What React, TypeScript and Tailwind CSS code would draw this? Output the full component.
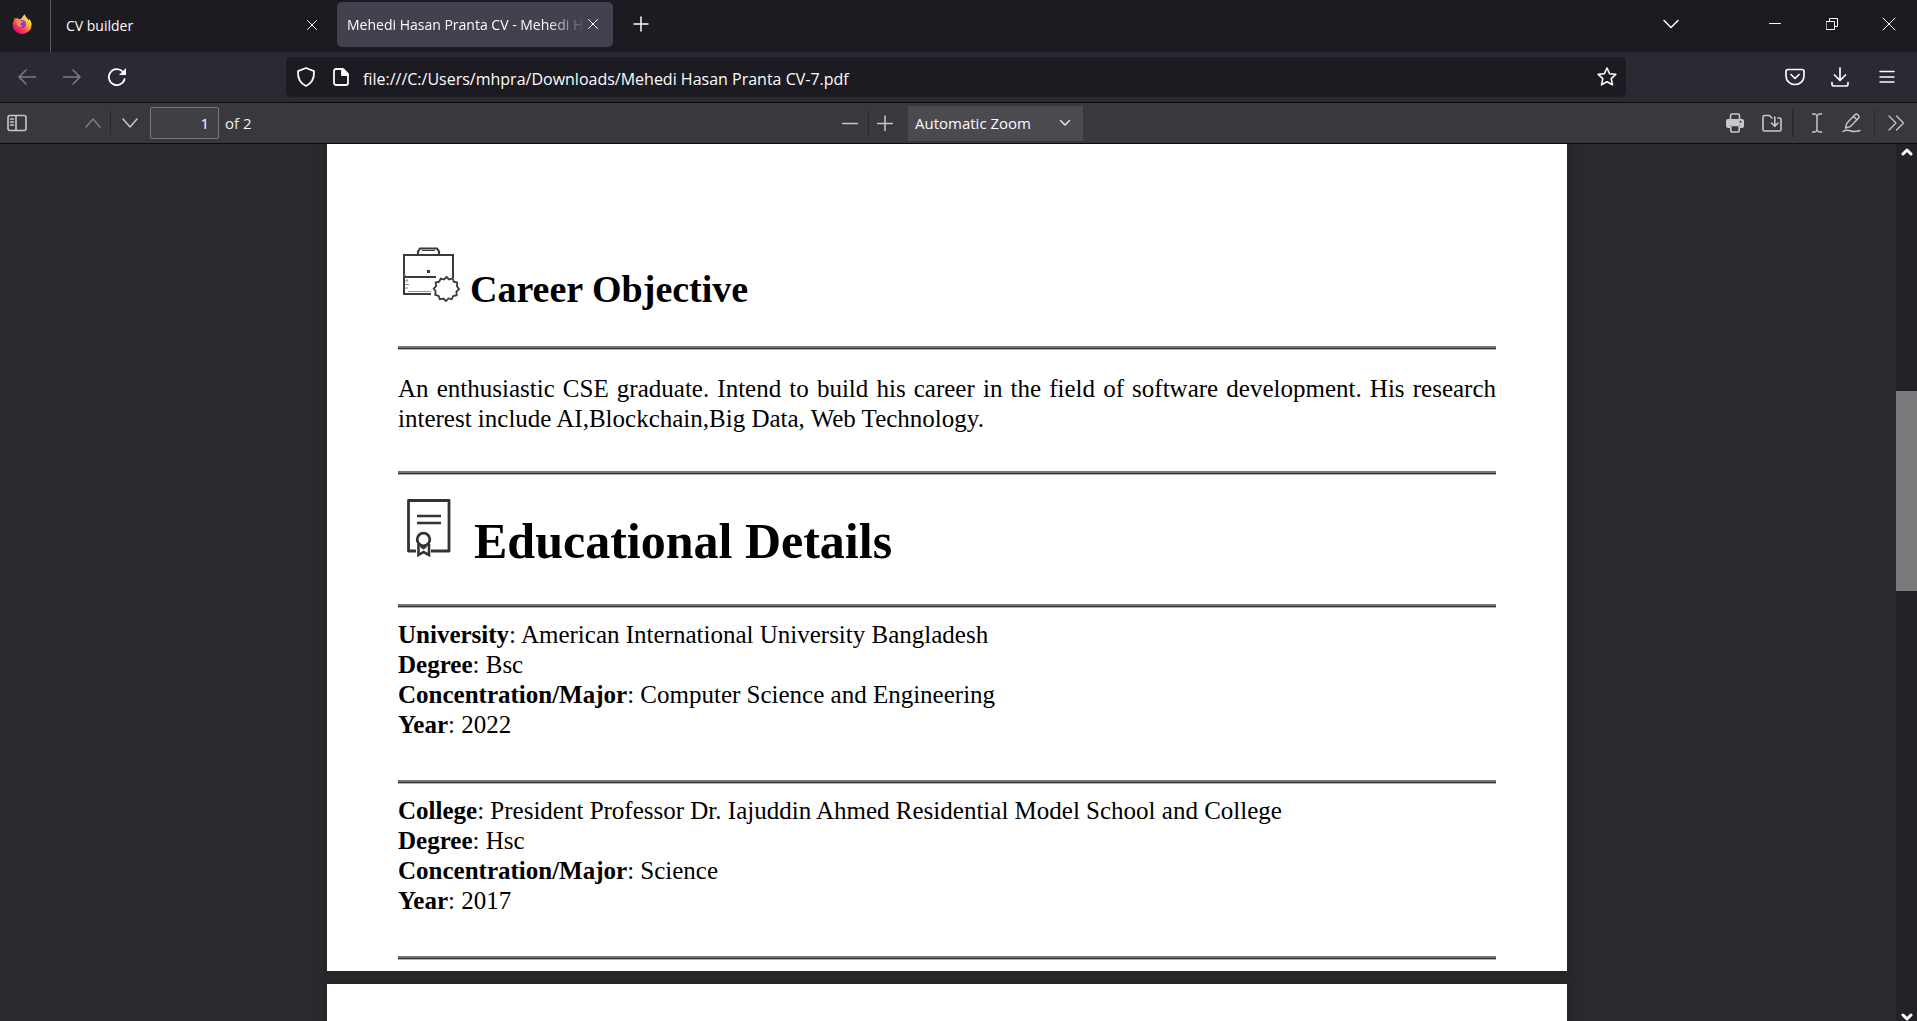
import React from "react";

type P = { d: string; size: number; sw?: number; vb?: number; cls?: string };

function Icon({ d, size, sw = 1.5, vb = 24, cls = "" }: P) {
  return (
    <svg width={size} height={size} viewBox={`0 0 ${vb} ${vb}`} fill="none" stroke="currentColor" strokeWidth={sw} strokeLinecap="round" strokeLinejoin="round" className={"shrink-0 " + cls} aria-hidden="true">
      <path d={d} />
    </svg>
  );
}

function FirefoxLogo() {
  return (
    <svg width="20" height="20" viewBox="0 0 20 20" aria-hidden="true">
      <defs>
        <linearGradient id="flame" x1="0.85" y1="0.1" x2="0.2" y2="0.95">
          <stop offset="0" stopColor="#fff44f" />
          <stop offset="0.35" stopColor="#ffb22e" />
          <stop offset="0.6" stopColor="#ff5a3c" />
          <stop offset="0.85" stopColor="#f5156c" />
          <stop offset="1" stopColor="#d9107c" />
        </linearGradient>
        <linearGradient id="globe" x1="0.7" y1="0" x2="0.3" y2="1">
          <stop offset="0" stopColor="#a63cf0" />
          <stop offset="1" stopColor="#5b3fe0" />
        </linearGradient>
      </defs>
      <path d="M12.800.2c.2 1.900 1.300 2.800 2.500 4 .6.600 1 1.300 1.200 2 .500-.300.700-.800.700-1.300 1.500 1.600 2.400 3.800 2.400 6a9.400 9.100 0 0 1-18.900 0c0-2.300.700-3.900 1.500-5.100 0-.900.200-1.700.600-2.300.300.700.700 1.100 1.200 1.500.500-.900 1-1.400 1.600-1.700 0 .7.200 1.200.6 1.600 1 .1 2 .1 2.900-.1 1-1.500 2.200-3.400 3.700-4.600z" fill="url(#flame)" />
      <circle cx="10" cy="10" r="4" fill="url(#globe)" />
      <path d="M4.300 7.400c1.200-1.200 3-1.400 4.300-.500.700.400 1.600.400 2.400.5-.2.900-1 1.300-1.800 1.600-.8.300-1 .8-.8 1.400.3.900 1.400 1.300 2.600.8-.7 1.600-2.800 2-4.200 1-1.500-1.100-2.200-3-2.500-4.800z" fill="#ff9640" />
    </svg>
  );
}

function Briefcase() {
  return (
    <svg width="64" height="64" viewBox="0 0 64 64" fill="none" stroke="#3a3a3a" aria-hidden="true" className="mb-[5px] shrink-0">
      <path d="M55 37V14H6V53H33" strokeWidth="2" />
      <path d="M6 36H38" strokeWidth="2" />
      <path d="M20 14V10.500L22 7.500H39L41 10.500V14" strokeWidth="2.200" />
      <path d="M24 9.500H37" strokeWidth="1" />
      <path d="M10 50.500H33" strokeWidth="1" stroke="#999" />
      <path d="M7 35V33M9 38v2M7 40H10M7 43.500H11M7 47H10" strokeWidth="1" stroke="#888" />
      <rect x="29.500" y="29.500" width="2" height="2" strokeWidth="1" fill="#3a3a3a" />
      <path d="M48.500 36l2.500 2.500 3.500-1.200 1.200 3.400 3.500.8-.3 3.600 2.100 3.100-2.600 2.500.3 3.500-3.500.8-1.500 3.300-3.300-.8-2.400 2.500-2.700-2.500-3.500.8-1.200-3.300-3.400-1.200.5-3.300-2-2.900 2.400-2.500-.4-3.600 3.500-.8 1.500-3.200 3.300 1z" strokeWidth="1.800" />
    </svg>
  );
}

function Certificate() {
  return (
    <svg width="64" height="64" viewBox="0 0 64 64" fill="none" stroke="#333" aria-hidden="true" className="mb-3 shrink-0">
      <path d="M18 58H10.500V7.500H51V58H33" strokeWidth="2.800" strokeLinejoin="round" />
      <path d="M19 23H43M19 30H43" strokeWidth="2.600" />
      <circle cx="25.500" cy="46.500" r="6.300" strokeWidth="2.800" />
      <path d="M20.500 51V62L25.500 59L31 62V51M23 53.500L25.500 55L28 53.500" strokeWidth="2.600" />
    </svg>
  );
}

const Rule = ({ cls }: { cls: string }) => (
  <hr className={"h-[3px] border-0 border-t-2 border-b border-t-[#777] border-b-[#333] shadow-[0_1px_0_#b4b4b4] " + cls} />
);

const btn = "flex shrink-0 items-center justify-center";

function Entry({ rows }: { rows: [string, string][] }) {
  return (
    <dl>
      {rows.map(([k, v]) => (
        <div key={k}>
          <dt className="inline font-bold">{k}</dt>
          <dd className="inline">: {v}</dd>
        </div>
      ))}
    </dl>
  );
}

export default function App() {
  return (
    <div className="flex h-screen flex-col overflow-hidden bg-[#2a2a2e] font-['Open_Sans',sans-serif] text-[#fbfbfe]">
      <header className="flex h-[52px] shrink-0 items-center bg-[#1c1b22]">
        <button aria-label="Firefox" className={btn + " h-full w-[51px] border-r border-[#5b5b66] pr-1.5 pb-1"}><FirefoxLogo /></button>
        <div className="flex w-[286px] items-center justify-between pb-0.5 pl-[15px] pr-4">
          <button className="text-[14px]">CV builder</button>
          <button aria-label="Close CV builder" className={btn + " size-[18px]"}><Icon size={12} vb={12} sw={1} d="M1.500 1.500l9 9M10.500 1.500l-9 9" /></button>
        </div>
        <div className="mb-1 flex h-[45px] w-[276px] items-center rounded-[5px] bg-[#42414d] pl-[10px] pr-3">
          <button className="min-w-0 flex-1 text-left text-[14px] whitespace-nowrap [mask-image:linear-gradient(to_right,black_84%,transparent)]">Mehedi Hasan Pranta CV - Mehedi H</button>
          <button aria-label="Close tab" className={btn + " size-[16px]"}><Icon size={12} vb={12} sw={1} d="M1.500 1.500l9 9M10.500 1.500l-9 9" /></button>
        </div>
        <button aria-label="New tab" className={btn + " mb-1 ml-[18px] size-5"}><Icon size={16} vb={16} sw={1.500} d="M8 1v14M1 8h14" /></button>
        <div className="flex-1" />
        <div className="mb-1 flex items-center">
          <button aria-label="List all tabs" className={btn + " w-10"}><Icon size={18} vb={18} d="M2 5.500l7 7 7-7" /></button>
          <button aria-label="Minimize" className={btn + " ml-[55px] w-[57px]"}><Icon size={12} vb={12} sw={1} d="M0 5.500h12" /></button>
          <button aria-label="Restore" className={btn + " w-[57px]"}><Icon size={12} vb={12} sw={1} d="M.5 3.500h8v8h-8zM3.500 3.500v-3h8v8h-3" /></button>
          <button aria-label="Close window" className={btn + " w-[57px]"}><Icon size={14} vb={14} sw={1} d="M1 1l12 12M13 1L1 13" /></button>
        </div>
      </header>

      <nav className="flex h-[50px] shrink-0 items-center bg-[#2b2a33]">
        <button aria-label="Back" className={btn + " ml-1 w-[45px] text-[#7d7c85]"}><Icon size={20} vb={20} d="M18.500 10H2M9 3L2 10l7 7" /></button>
        <button aria-label="Forward" className={btn + " w-[45px] text-[#7d7c85]"}><Icon size={20} vb={20} d="M1.500 10H18M11 3l7 7-7 7" /></button>
        <button aria-label="Reload" className={btn + " w-[45px]"}>
          <svg width="20" height="20" viewBox="0 0 20 20" fill="none" stroke="currentColor" strokeWidth="1.800" strokeLinecap="round" aria-hidden="true"><path d="M17.600 12a8 8 0 1 1-2-7.500" /><path d="M19 1v7h-7z" fill="currentColor" stroke="none" /></svg>
        </button>
        <div className="ml-[147px] flex h-10 flex-1 items-center rounded-[5px] bg-[#1c1b22]">
          <button aria-label="Tracking protection" className={btn + " ml-[10px] w-5"}><Icon size={20} vb={20} sw={1.800} d="M10 1l8 3.200c.3 6-2 12-8 14.800-6-2.800-8.300-8.800-8-14.800z" /></button>
          <button aria-label="Page information" className={btn + " ml-[15px] w-5"}>
            <svg width="18" height="18" viewBox="0 0 18 18" fill="none" stroke="currentColor" strokeWidth="1.800" strokeLinejoin="round" aria-hidden="true"><path d="M4 1h7l5 5v9a2 2 0 0 1-2 2H4a2 2 0 0 1-2-2V3a2 2 0 0 1 2-2z" /><path d="M10 1v6h6z" fill="currentColor" /></svg>
          </button>
          <input aria-label="Address" readOnly value="file:///C:/Users/mhpra/Downloads/Mehedi Hasan Pranta CV-7.pdf" className="ml-3 min-w-0 flex-1 bg-transparent pt-1 text-[16px] outline-none" />
          <button aria-label="Bookmark" className={btn + " mr-[9px] w-5"}><Icon size={20} vb={20} sw={1.600} d="M10 1l2.600 5.700 6.200.7-4.600 4.200 1.300 6.200L10 14.700l-5.500 3.100 1.300-6.200L1.200 7.400l6.200-.7z" /></button>
        </div>
        <button aria-label="Save to Pocket" className={btn + " ml-[147px] w-11"}><Icon size={20} vb={20} sw={1.700} d="M3 2.500h14a2 2 0 0 1 2 2V9a9 8.500 0 0 1-18 0V4.500a2 2 0 0 1 2-2zM6 7.500l4 4 4-4" /></button>
        <button aria-label="Downloads" className={btn + " w-[46px]"}><Icon size={20} vb={20} sw={1.700} d="M10 1v12M4.500 8l5.500 5.500L15.500 8M2 15.500v1.500a2 2 0 0 0 2 2h12a2 2 0 0 0 2-2v-1.500" /></button>
        <button aria-label="Menu" className={btn + " mr-1.5 w-12"}><Icon size={18} vb={18} sw={1.500} d="M2 3.500h14M2 9h14M2 14h14" /></button>
      </nav>

      <div role="toolbar" aria-label="Document" className="flex h-[42px] shrink-0 items-center justify-between border-y border-[#0c0c0d] bg-[#38383d] text-[#c8c8ca]">
        <div className="flex flex-1 items-center">
          <button aria-label="Toggle sidebar" className={btn + " ml-[7px] w-5"}><Icon size={20} vb={20} sw={1.600} d="M3 2.500h14a2 2 0 0 1 2 2v11a2 2 0 0 1-2 2H3a2 2 0 0 1-2-2v-11a2 2 0 0 1 2-2zM9 2.500v15M3.500 6h3M3.500 9h3M3.500 12h3" /></button>
          <button aria-label="Previous page" className={btn + " ml-[49px] w-[34px] text-[#7f7f83]"}><Icon size={16} vb={16} d="M1 12l7-8 7 8" /></button>
          <span className="h-6 w-px bg-[#29292c]" />
          <button aria-label="Next page" className={btn + " w-[38px]"}><Icon size={16} vb={16} d="M1 4l7 8 7-8" /></button>
          <input aria-label="Page" readOnly value="1" className="ml-px h-8 w-[69px] rounded-[2px] border border-[#77777b] bg-[#404044] pr-[9px] text-right text-[15px] text-[#fbfbfe]" />
          <span className="ml-1.5 text-[15px] text-[#f0f0f2]">of 2</span>
        </div>
        <div className="flex shrink-0 items-center pr-0.5">
          <button aria-label="Zoom out" className={btn + " w-9"}><Icon size={16} vb={16} d="M.5 8.500h15" /></button>
          <span className="h-6 w-px bg-[#29292c]" />
          <button aria-label="Zoom in" className={btn + " w-8"}><Icon size={16} vb={16} d="M.5 8.500h15M8 1v15" /></button>
          <div className="relative ml-[7px] flex items-center">
            <select aria-label="Zoom" className="h-[35px] w-[175px] appearance-none bg-[#4a4a4f] pl-[7px] text-[15px] text-[#fbfbfe]"><option>Automatic Zoom</option></select>
            <Icon size={12} vb={12} cls="pointer-events-none absolute right-3 text-[#e6e6e8]" d="M1.500 3.500L6 8l4.500-4.500" />
          </div>
        </div>
        <div className="flex flex-1 items-center justify-end">
          <button aria-label="Print" className={btn + " w-9"}>
            <svg width="20" height="20" viewBox="0 0 20 20" aria-hidden="true"><path d="M5.500 6V2.500a1.500 1.500 0 0 1 1.500-1.500h6a1.500 1.500 0 0 1 1.500 1.500V6" fill="none" stroke="currentColor" strokeWidth="1.600" /><path d="M3 6h14a2 2 0 0 1 2 2v5a2 2 0 0 1-2 2h-2v-3H5v3H3a2 2 0 0 1-2-2V8a2 2 0 0 1 2-2z" fill="currentColor" /><rect x="5.800" y="12.500" width="8.400" height="6.500" rx="1" fill="none" stroke="currentColor" strokeWidth="1.600" /><circle cx="15.500" cy="8.800" r="1.100" fill="#38383d" /></svg>
          </button>
          <button aria-label="Save" className={btn + " w-[38px]"}><Icon size={20} vb={20} sw={1.600} d="M7.500 2.500H2.500A1.500 1.500 0 0 0 1 4v12.500A1.500 1.500 0 0 0 2.500 18h15a1.500 1.500 0 0 0 1.500-1.500V6.500A1.500 1.500 0 0 0 17.500 5H16M7.500 2.500L10 5M12.800 4v9M9.500 10l3.300 3.300L16 10" /></button>
          <span className="ml-px h-7 w-[2px] bg-[#29292c]" />
          <button aria-label="Text" className={btn + " ml-[5px] w-9"}><Icon size={20} vb={20} d="M5.500 1H8l2 1.500L12 1h2.500M5.500 19H8l2-1.500 2 1.500h2.500M10 2.500v15" /></button>
          <button aria-label="Draw" className={btn + " ml-px w-8"}><Icon size={20} vb={20} sw={1.400} d="M3.500 15l1.300-4.700L13 1.800a2 2 0 0 1 2.800 0l.6.600a2 2 0 0 1 0 2.800L8.200 13.700zM11.500 3.300l3.400 3.400M1 18.500c3-2 5-1.500 8-.5s6 .5 9-.5" /></button>
          <span className="ml-[6px] h-7 w-px bg-[#29292c]" />
          <button aria-label="Tools" className={btn + " mr-[3px] ml-[3px] w-9"}><Icon size={18} vb={18} sw={1.300} d="M2 2l7 7-7 7M9.500 2l7 7-7 7" /></button>
        </div>
      </div>

      <div className="flex min-h-0 flex-1">
        <main className="min-w-0 flex-1 overflow-hidden pr-0.5 font-['Liberation_Serif',serif] text-[25px] leading-[30px] text-black">
          <article className="mx-auto w-[1240px] max-w-full bg-white px-[71px] pb-3 shadow-[0_0_8px_2px_#232326]">
            <div className="flex items-end gap-2 pt-[97px]">
              <Briefcase />
              <h2 className="text-[38px] leading-[42px] font-bold">Career Objective</h2>
            </div>
            <Rule cls="mt-[36px]" />
            <p className="mt-[25px] text-justify">An enthusiastic CSE graduate. Intend to build his career in the field of software development. His research interest include AI,Blockchain,Big Data, Web Technology.</p>
            <Rule cls="mt-[37px]" />
            <div className="mt-[19px] flex items-end gap-3">
              <Certificate />
              <h1 className="text-[50px] leading-[56px] font-bold">Educational Details</h1>
            </div>
            <Rule cls="mt-[35px]" />
            <div className="mt-[13px]"><Entry rows={[["University", "American International University Bangladesh"], ["Degree", "Bsc"], ["Concentration/Major", "Computer Science and Engineering"], ["Year", "2022"]]} /></div>
            <Rule cls="mt-[40px]" />
            <div className="mt-[13px]"><Entry rows={[["College", "President Professor Dr. Iajuddin Ahmed Residential Model School and College"], ["Degree", "Hsc"], ["Concentration/Major", "Science"], ["Year", "2017"]]} /></div>
            <Rule cls="mt-[40px]" />
          </article>
          <article className="mx-auto mt-[13px] h-40 w-[1240px] max-w-full bg-white shadow-[0_0_8px_2px_#232326]" />
        </main>
        <div className="flex w-[21px] shrink-0 flex-col items-center justify-between bg-[#232227] text-white">
          <button aria-label="Scroll up" className={btn + " h-4 w-full"}><Icon size={12} vb={12} sw={3} d="M2 8l4-4 4 4" /></button>
          <div className="flex w-full flex-1 flex-col">
            <div className="flex-[230_0_0%]" />
            <div className="w-full flex-[198_0_0%] bg-[#7a7a7c]" />
            <div className="flex-[420_0_0%]" />
          </div>
          <button aria-label="Scroll down" className={btn + " h-2 w-full"}><Icon size={12} vb={12} sw={3} d="M2 4l4 4 4-4" /></button>
        </div>
      </div>
    </div>
  );
}
